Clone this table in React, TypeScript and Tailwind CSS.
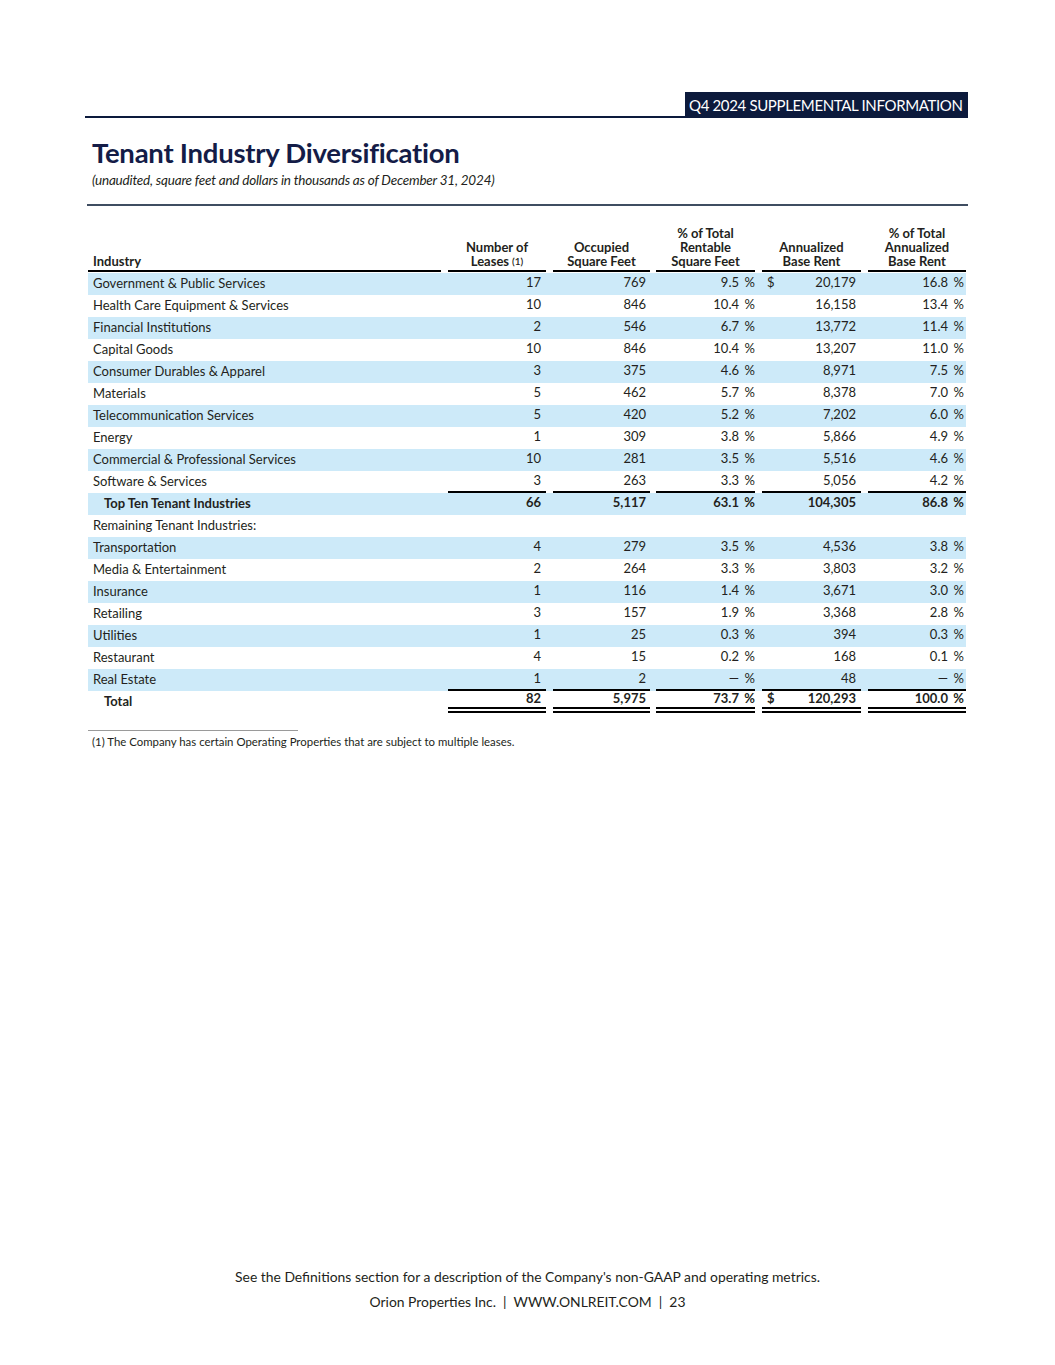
import React from "react";

type Row = {
  name: string;
  leases: string;
  sqft: string;
  pct: string;
  dollar?: boolean;
  abr: string;
  pctAbr: string;
  bold?: boolean;
  indent?: boolean;
  under?: "single" | "double";
  empty?: boolean;
};

const rows: Row[] = [
  { name: "Government & Public Services", leases: "17", sqft: "769", pct: "9.5", dollar: true, abr: "20,179", pctAbr: "16.8" },
  { name: "Health Care Equipment & Services", leases: "10", sqft: "846", pct: "10.4", abr: "16,158", pctAbr: "13.4" },
  { name: "Financial Institutions", leases: "2", sqft: "546", pct: "6.7", abr: "13,772", pctAbr: "11.4" },
  { name: "Capital Goods", leases: "10", sqft: "846", pct: "10.4", abr: "13,207", pctAbr: "11.0" },
  { name: "Consumer Durables & Apparel", leases: "3", sqft: "375", pct: "4.6", abr: "8,971", pctAbr: "7.5" },
  { name: "Materials", leases: "5", sqft: "462", pct: "5.7", abr: "8,378", pctAbr: "7.0" },
  { name: "Telecommunication Services", leases: "5", sqft: "420", pct: "5.2", abr: "7,202", pctAbr: "6.0" },
  { name: "Energy", leases: "1", sqft: "309", pct: "3.8", abr: "5,866", pctAbr: "4.9" },
  { name: "Commercial & Professional Services", leases: "10", sqft: "281", pct: "3.5", abr: "5,516", pctAbr: "4.6" },
  { name: "Software & Services", leases: "3", sqft: "263", pct: "3.3", abr: "5,056", pctAbr: "4.2", under: "single" },
  { name: "Top Ten Tenant Industries", leases: "66", sqft: "5,117", pct: "63.1", abr: "104,305", pctAbr: "86.8", bold: true, indent: true },
  { name: "Remaining Tenant Industries:", leases: "", sqft: "", pct: "", abr: "", pctAbr: "", empty: true },
  { name: "Transportation", leases: "4", sqft: "279", pct: "3.5", abr: "4,536", pctAbr: "3.8" },
  { name: "Media & Entertainment", leases: "2", sqft: "264", pct: "3.3", abr: "3,803", pctAbr: "3.2" },
  { name: "Insurance", leases: "1", sqft: "116", pct: "1.4", abr: "3,671", pctAbr: "3.0" },
  { name: "Retailing", leases: "3", sqft: "157", pct: "1.9", abr: "3,368", pctAbr: "2.8" },
  { name: "Utilities", leases: "1", sqft: "25", pct: "0.3", abr: "394", pctAbr: "0.3" },
  { name: "Restaurant", leases: "4", sqft: "15", pct: "0.2", abr: "168", pctAbr: "0.1" },
  { name: "Real Estate", leases: "1", sqft: "2", pct: "—", abr: "48", pctAbr: "—", under: "single" },
  { name: "Total", leases: "82", sqft: "5,975", pct: "73.7", dollar: true, abr: "120,293", pctAbr: "100.0", bold: true, indent: true, under: "double" },
];

function numCellClass(under?: "single" | "double") {
  if (under === "single") return "border-b-2 border-black";
  if (under === "double") return "border-b-[6px] border-double border-black";
  return "border-b-2 border-transparent";
}

export default function App() {
  return (
    <div
      className="relative w-[1055px] h-[1365px] bg-white text-[#231f20]"
      style={{ fontFamily: "Lato, 'Liberation Sans', sans-serif" }}
    >
      {/* Header bar */}
      <div className="pt-[92px] pl-[85px] w-[968px] flex items-end">
        <div className="flex-1 h-[2px] bg-[#0c1a3c]"></div>
        <div className="w-[283px] h-[26px] bg-[#0c1a3c] text-white text-[15px] leading-[27px] pl-[4px] tracking-[-0.35px] whitespace-nowrap">
          Q4 2024 SUPPLEMENTAL INFORMATION
        </div>
      </div>

      {/* Title */}
      <div className="pl-[92px] pt-[19px]">
        <div className="text-[27.5px] leading-[32px] font-bold text-[#141c47] tracking-[-0.25px]">
          Tenant Industry Diversification
        </div>
        <div className="text-[13.5px] leading-[16px] italic text-[#231f20] mt-[3px] tracking-[-0.2px]">
          (unaudited, square feet and dollars in thousands as of December 31, 2024)
        </div>
      </div>

      {/* Divider */}
      <div className="ml-[87px] w-[881px] h-[2px] bg-[#3f4d61] mt-[16px]"></div>

      {/* Table */}
      <div className="ml-[88px] w-[878px] mt-[20px] text-[13px]">
        {/* Header */}
        <div className="flex items-end font-bold leading-[14px]">
          <div className="w-[353px] border-b-2 border-black pl-[5px] pb-[2px]">Industry</div>
          <div className="w-[7px]"></div>
          <div className="w-[98px] border-b-2 border-black text-center pb-[2px]">
            Number of
            <br />
            Leases<sup className="text-[10px] ml-[3px] relative top-[-1px] font-semibold">(1)</sup>
          </div>
          <div className="w-[7px]"></div>
          <div className="w-[97px] border-b-2 border-black text-center pb-[2px]">
            Occupied
            <br />
            Square Feet
          </div>
          <div className="w-[6px]"></div>
          <div className="w-[99px] border-b-2 border-black text-center pb-[2px]">
            % of Total
            <br />
            Rentable
            <br />
            Square Feet
          </div>
          <div className="w-[7px]"></div>
          <div className="w-[99px] border-b-2 border-black text-center pb-[2px]">
            Annualized
            <br />
            Base Rent
          </div>
          <div className="w-[7px]"></div>
          <div className="w-[98px] border-b-2 border-black text-center pb-[2px]">
            % of Total
            <br />
            Annualized
            <br />
            Base Rent
          </div>
        </div>

        {/* Body */}
        <div className="mt-[1px]">
          {rows.map((r, i) => {
            const bg = i % 2 === 0 ? "bg-[#cdeaf9]" : "bg-white";
            const weight = r.bold ? "font-bold" : "";
            const nc = numCellClass(r.under);
            return (
              <div key={i} className={`flex h-[22px] ${bg} ${weight}`}>
                <div className={`w-[353px] flex items-center ${r.indent ? "pl-[16px]" : "pl-[5px]"}`}>
                  {r.name}
                </div>
                <div className="w-[7px]"></div>
                <div className={`w-[98px] flex items-center justify-end pr-[5px] ${nc}`}>{r.leases}</div>
                <div className="w-[7px]"></div>
                <div className={`w-[97px] flex items-center justify-end pr-[4px] ${nc}`}>{r.sqft}</div>
                <div className="w-[6px]"></div>
                <div className={`w-[99px] flex items-center justify-end ${nc}`}>
                  {!r.empty && (
                    <>
                      <span>{r.pct}</span>
                      <span className="w-[16px] text-right">%</span>
                    </>
                  )}
                </div>
                <div className="w-[7px]"></div>
                <div className={`w-[99px] flex items-center justify-between pl-[5px] pr-[5px] ${nc}`}>
                  <span>{r.dollar ? "$" : ""}</span>
                  <span>{r.abr}</span>
                </div>
                <div className="w-[7px]"></div>
                <div className={`w-[98px] flex items-center justify-end pr-[2px] ${nc}`}>
                  {!r.empty && (
                    <>
                      <span>{r.pctAbr}</span>
                      <span className="w-[16px] text-right">%</span>
                    </>
                  )}
                </div>
              </div>
            );
          })}
        </div>

        {/* Footnote */}
        <div className="w-[210px] h-px bg-[#9a9a9a] mt-[17px]"></div>
        <div className="text-[11.4px] leading-[14px] mt-[4px] pl-[4px]">
          (1) The Company has certain Operating Properties that are subject to multiple leases.
        </div>
      </div>

      {/* Footer */}
      <div className="absolute left-0 right-0 top-[1268px] text-center text-[13.9px] leading-[18px]">
        <div>See the Definitions section for a description of the Company's non-GAAP and operating metrics.</div>
        <div className="mt-[7px]">
          Orion Properties Inc.&nbsp;&nbsp;|&nbsp;&nbsp;WWW.ONLREIT.COM&nbsp;&nbsp;|&nbsp;&nbsp;23
        </div>
      </div>
    </div>
  );
}
